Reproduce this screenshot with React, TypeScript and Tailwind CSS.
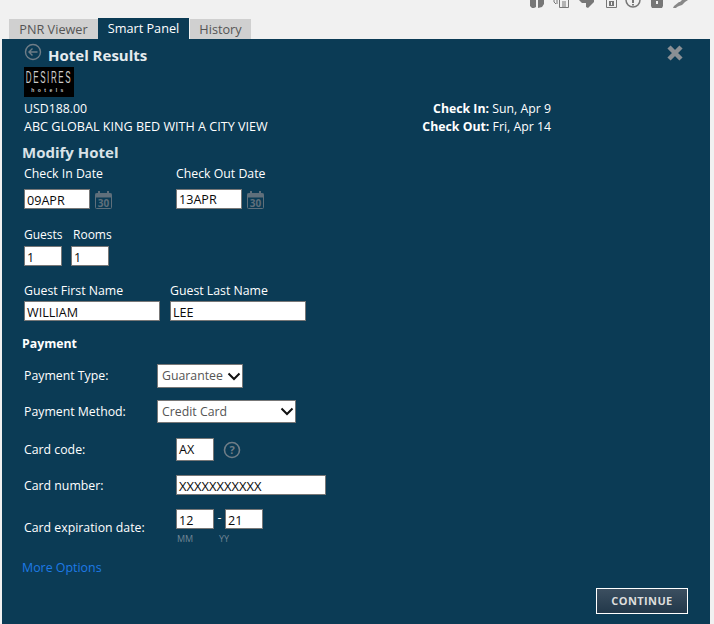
import React from "react";

function Field({ w, value, className = "" }: { w: string; value: string; className?: string }) {
  return (
    <div className={`${w} h-[20px] bg-white border border-[#777] pl-[2px] text-[#0a0a0a] text-[12.6px] leading-[22px] overflow-hidden ${className}`}>
      {value}
    </div>
  );
}

function Calendar() {
  return (
    <svg width="17" height="18" viewBox="0 0 17 18" className="ml-[5px] mt-[2px]">
      <rect x="0.5" y="2.5" width="16" height="15" rx="1" fill="none" stroke="#5f6f7b" />
      <rect x="0.5" y="2.5" width="16" height="4" fill="#5f6f7b" />
      <rect x="3" y="0" width="2" height="4" fill="#5f6f7b" />
      <rect x="12" y="0" width="2" height="4" fill="#5f6f7b" />
      <text x="8.5" y="15.5" textAnchor="middle" fontSize="10" fontWeight="700" fill="#5f6f7b" fontFamily="Open Sans, sans-serif">30</text>
    </svg>
  );
}

function Chevron() {
  return (
    <svg width="14" height="9" viewBox="0 0 14 9">
      <path d="M1.5 1.5 L7 7 L12.5 1.5" fill="none" stroke="#111" strokeWidth="2" />
    </svg>
  );
}

function TopIcons() {
  return (
    <div className="flex justify-end items-start h-[8px] pr-[26px] overflow-hidden">
      <svg width="14" height="8" viewBox="0 0 14 8"><path d="M0 0h6v7l-2 1H2L0 6zM8 0h6v4l-2 3-4 1z" fill="#777" /></svg>
      <svg width="16" height="8" viewBox="0 0 16 8" className="ml-[9px]"><path d="M6.5 0v7.5h9V0M9 2h4M9 4h4M9 6h4M1 0v2l2 2M4 0v4" fill="none" stroke="#777" /></svg>
      <svg width="15" height="8" viewBox="0 0 15 8" className="ml-[10px]"><path d="M0 0h15v2l-4 4-2 2-2-1V3H3z" fill="#777" /></svg>
      <svg width="11" height="8" viewBox="0 0 11 8" className="ml-[12px]"><path d="M.5 0v7.5h10V0" fill="none" stroke="#777" /><rect x="3" y="1" width="5" height="5" fill="#777" /><rect x="5" y="2" width="1" height="3" fill="#f1f1f1" /></svg>
      <svg width="16" height="8" viewBox="0 0 16 8" className="ml-[8px]"><path d="M1 0a7 7 0 0 0 14 0" fill="none" stroke="#777" strokeWidth="1.5" /><rect x="7" y="0" width="2" height="3" fill="#777" /><rect x="7" y="4" width="2" height="1.5" fill="#777" /></svg>
      <svg width="12" height="8" viewBox="0 0 12 8" className="ml-[10px]"><path d="M0 0h12v6l-1 2H1L0 6z" fill="#777" /><rect x="5" y="1" width="2" height="3" fill="#f1f1f1" /></svg>
      <svg width="15" height="8" viewBox="0 0 15 8" className="ml-[10px]"><path d="M0 8l1-2 5-4h1l2-2h6l-3 2-3 3-3 1-2 1-1 1z" fill="#888" /></svg>
    </div>
  );
}

export default function App() {
  return (
    <div className="w-[714px] h-[624px] bg-[#f1f1f1] overflow-hidden font-['Open_Sans',sans-serif] text-[12.3px] text-white">
      <TopIcons />
      <div className="flex items-end pl-[9px] h-[31px] text-[12.7px] leading-[20px]">
        <div className="w-[89px] h-[20px] bg-[#d0d0d0] text-[#555] text-center">PNR Viewer</div>
        <div className="w-[91px] h-[21px] bg-[#0b3b55] text-white text-center">Smart Panel</div>
        <div className="ml-[1px] w-[61px] h-[20px] bg-[#d0d0d0] text-[#555] text-center">History</div>
      </div>
      <div className="relative ml-[2px] w-[708px] h-[585px] bg-[#0b3b55] pl-[22px]">
        <svg width="18" height="18" viewBox="0 0 18 18" className="absolute left-[22px] top-[4px]">
          <circle cx="9" cy="9" r="7.5" fill="none" stroke="#6f7d87" strokeWidth="1.4" />
          <path d="M13.5 9H5M8.5 5.5 5 9l3.5 3.5" fill="none" stroke="#6f7d87" strokeWidth="1.4" />
        </svg>
        <svg width="18" height="18" viewBox="0 0 18 18" className="absolute left-[664px] top-[5px]">
          <path d="M3 3 L15 15 M15 3 L3 15" stroke="#8a8f94" strokeWidth="4.5" />
        </svg>
        <div className="pl-[24px] pt-[6px] text-[15px] leading-[20px] font-bold text-[#e6ecef]">Hotel Results</div>
        <div className="w-[50px] h-[30px] bg-black mt-[2px] flex flex-col items-center overflow-hidden pt-[4px]">
          <div className="h-[16px] font-['Liberation_Sans',sans-serif] text-[8px] leading-[8px] tracking-[1.6px] text-[#ccc] scale-y-[2] origin-top whitespace-nowrap">DESIRES</div>
          <div className="font-['Liberation_Sans',sans-serif] text-[5px] leading-[6px] tracking-[3.5px] font-bold text-[#ccc]">hotels</div>
        </div>
        <div className="flex">
          <div className="w-[378px]">
            <div className="pt-[3px] leading-[18px]">USD188.00</div>
            <div className="text-[12.6px] leading-[18px] whitespace-nowrap">ABC GLOBAL KING BED WITH A CITY VIEW</div>
          </div>
          <div className="w-[149px] pt-[3px] text-right leading-[18px]">
            <div><b>Check In:</b> Sun, Apr 9</div>
            <div><b>Check Out:</b> Fri, Apr 14</div>
          </div>
        </div>
        <div className="-ml-[2px] mt-[6px] text-[15px] leading-[20px] font-bold text-[#d9e2e7]">Modify Hotel</div>

        <div className="flex mt-[3px] leading-[18px]">
          <div className="w-[152px]">
            <div>Check In Date</div>
            <div className="flex mt-[6px]"><Field w="w-[66px]" value="09APR" /><Calendar /></div>
          </div>
          <div>
            <div>Check Out Date</div>
            <div className="flex mt-[6px]"><Field w="w-[66px]" value="13APR" className="leading-[20px]!" /><Calendar /></div>
          </div>
        </div>

        <div className="flex gap-[9px] mt-[17px] leading-[18px]">
          <div className="w-[38px]">
            <div className="whitespace-nowrap text-[12px]">Guests</div>
            <Field w="w-[38px]" value="1" className="mt-[2px]" />
          </div>
          <div className="w-[38px]">
            <div className="pl-[2px] whitespace-nowrap text-[12px]">Rooms</div>
            <Field w="w-[38px]" value="1" className="mt-[2px]" />
          </div>
        </div>

        <div className="flex gap-[10px] mt-[16px] leading-[18px]">
          <div>
            <div>Guest First Name</div>
            <Field w="w-[136px]" value="WILLIAM" className="mt-[1px]" />
          </div>
          <div>
            <div>Guest Last Name</div>
            <Field w="w-[136px]" value="LEE" className="mt-[1px]" />
          </div>
        </div>

        <div className="-ml-[2px] mt-[14px] leading-[18px] font-bold">Payment</div>

        <div className="flex items-center mt-[11px] h-[24px]">
          <div className="w-[133px]">Payment Type:</div>
          <div className="w-[86px] h-[24px] bg-white border border-[#777] flex items-center justify-between pl-[4px] pr-[1px] text-[#555]">Guarantee <Chevron /></div>
        </div>
        <div className="flex items-center mt-[12px] h-[23px]">
          <div className="w-[133px] pt-[2px]">Payment Method:</div>
          <div className="w-[139px] h-[23px] bg-white border border-[#777] flex items-center justify-between pl-[4px] pr-[1px] text-[#555]"><span className="pt-[2px]">Credit Card</span> <Chevron /></div>
        </div>
        <div className="flex items-center mt-[15px] h-[23px]">
          <div className="w-[152px] pt-[2px]">Card code:</div>
          <Field w="w-[38px] h-[23px]" value="AX" />
          <svg width="18" height="18" viewBox="0 0 18 18" className="ml-[9px]">
            <circle cx="9" cy="9" r="7.5" fill="none" stroke="#6f7d87" strokeWidth="1.6" />
            <text x="9" y="13" textAnchor="middle" fontSize="11" fontWeight="700" fill="#6f7d87" fontFamily="Open Sans, sans-serif">?</text>
          </svg>
        </div>
        <div className="flex items-center mt-[14px] h-[20px]">
          <div className="w-[152px] pt-[2px]">Card number:</div>
          <Field w="w-[150px]" value="XXXXXXXXXXX" className="text-[13px]! leading-[20px]!" />
        </div>
        <div className="flex mt-[14px]">
          <div className="w-[152px] pt-[10px]">Card expiration date:</div>
          <div>
            <div className="flex">
              <Field w="w-[38px]" value="12" />
              <div className="w-[11px] text-center leading-[18px]">-</div>
              <Field w="w-[38px]" value="21" />
            </div>
            <div className="flex text-[9px] leading-[12px] text-[#6f8494] mt-[4px]">
              <div className="w-[43px] pl-[1px]">MM</div>
              <div>YY</div>
            </div>
          </div>
        </div>
        <div className="-ml-[2px] mt-[14px] text-[12.4px] leading-[18px] text-[#1e7ae6]">More Options</div>
        <div className="absolute left-[594px] top-[549px] w-[92px] h-[26px] border border-white bg-gradient-to-b from-[#3c4f60] to-[#22384a] text-center text-[11px] leading-[24px] font-bold tracking-[0.4px] text-[#ddd]">CONTINUE</div>
      </div>
    </div>
  );
}
